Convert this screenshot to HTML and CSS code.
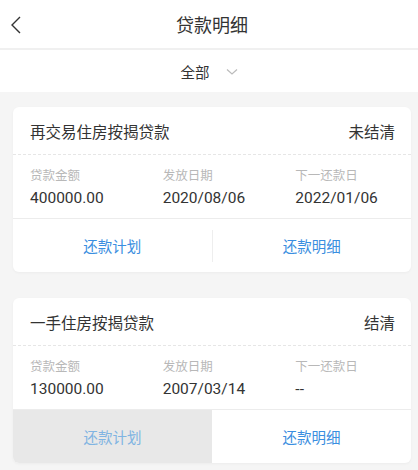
FILE: index.html
```html
<!DOCTYPE html>
<html lang="zh-CN">
<head>
    <meta charset="UTF-8">
    <meta name="viewport" content="width=device-width, initial-scale=1.0">
    <title>贷款明细</title>
    <link rel="stylesheet" href="styles.css">
</head>
<body>
    <div class="header">
        <span class="back">
            <svg width="12" height="18" viewBox="0 0 12 18"><path d="M10 1 L2 9 L10 17" fill="none" stroke="#333" stroke-width="1.4"/></svg>
        </span>
        <div class="header-title">贷款明细</div>
    </div>

    <div class="filter">
        <span class="filter-text">全部</span>
        <svg class="filter-arrow" width="12" height="8" viewBox="0 0 12 8"><path d="M1 1.5 L6 6 L11 1.5" fill="none" stroke="#bbb" stroke-width="1.2"/></svg>
    </div>

    <div class="list">
        <div class="card">
            <div class="card-head">
                <span class="loan-name">再交易住房按揭贷款</span>
                <span class="loan-status">未结清</span>
            </div>
            <div class="card-info">
                <div class="info-col">
                    <div class="info-label">贷款金额</div>
                    <div class="info-value">400000.00</div>
                </div>
                <div class="info-col">
                    <div class="info-label">发放日期</div>
                    <div class="info-value">2020/08/06</div>
                </div>
                <div class="info-col">
                    <div class="info-label">下一还款日</div>
                    <div class="info-value">2022/01/06</div>
                </div>
            </div>
            <div class="card-actions">
                <div class="action">还款计划</div>
                <div class="action-divider"></div>
                <div class="action">还款明细</div>
            </div>
        </div>

        <div class="card">
            <div class="card-head">
                <span class="loan-name">一手住房按揭贷款</span>
                <span class="loan-status">结清</span>
            </div>
            <div class="card-info">
                <div class="info-col">
                    <div class="info-label">贷款金额</div>
                    <div class="info-value">130000.00</div>
                </div>
                <div class="info-col">
                    <div class="info-label">发放日期</div>
                    <div class="info-value">2007/03/14</div>
                </div>
                <div class="info-col">
                    <div class="info-label">下一还款日</div>
                    <div class="info-value">--</div>
                </div>
            </div>
            <div class="card-actions">
                <div class="action action-pressed">还款计划</div>
                <div class="action">还款明细</div>
            </div>
        </div>
    </div>
</body>
</html>
```

FILE: styles.css
```css
body {
    margin: 0;
    background-color: #f5f5f5;
    color: #333;
    font-family: Roboto, "Noto Sans CJK SC", sans-serif;
}

.header {
    height: 48px;
    background-color: #fff;
    border-bottom: 2px solid #f0f0f0;
    display: flex;
    align-items: center;
    justify-content: center;
    position: relative;
}

.back {
    position: absolute;
    left: 10px;
    top: 16px;
    display: flex;
}

.header-title {
    font-size: 18px;
    padding-left: 6px;
}

.filter {
    height: 42px;
    background-color: #fff;
    display: flex;
    align-items: center;
    justify-content: center;
    gap: 16px;
}

.filter-text {
    font-size: 14.5px;
}

.filter-arrow {
    margin-top: 1px;
}

.list {
    padding: 15px 7px 0 13px;
}

.card {
    background-color: #fff;
    border-radius: 6px;
    box-shadow: 0 1px 3px rgba(0, 0, 0, 0.04);
    margin-bottom: 26px;
    overflow: hidden;
}

.card-head {
    height: 47px;
    padding: 0 16px 0 17px;
    display: flex;
    align-items: center;
    justify-content: space-between;
    font-size: 15.5px;
    border-bottom: 1px dashed #e6e6e6;
}

.card-info {
    height: 63px;
    display: flex;
    border-bottom: 1px solid #ececec;
}

.info-col {
    width: 33.3%;
    padding: 12px 0 0 17px;
}

.info-label {
    font-size: 12.5px;
    color: #b8b8b8;
    line-height: 18px;
}

.info-value {
    font-size: 15.5px;
    line-height: 26px;
}

.card-actions {
    height: 53px;
    display: flex;
    align-items: center;
}

.action {
    flex: 1;
    height: 100%;
    display: flex;
    align-items: center;
    justify-content: center;
    font-size: 14.5px;
    color: #3a8ee0;
}

.action-divider {
    width: 1px;
    height: 32px;
    background-color: #eee;
}

.action-pressed {
    background-color: #e8e8e8;
    color: #80b4e2;
}
```
